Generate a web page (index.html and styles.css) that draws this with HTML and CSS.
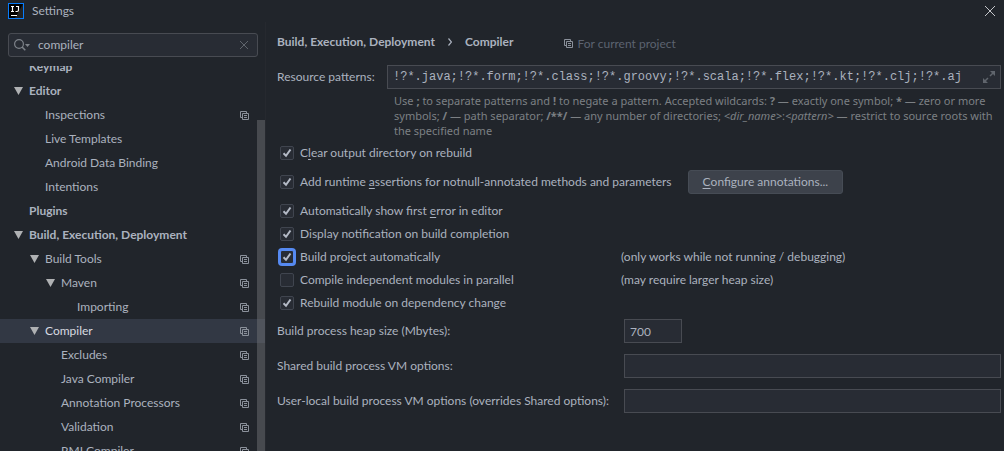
FILE: index.html
```html
<!DOCTYPE html>
<html lang="en">
<head>
<meta charset="utf-8">
<title>Settings</title>
<link rel="stylesheet" href="styles.css">
</head>
<body>
<svg class="defs" aria-hidden="true">
  <symbol id="copy" viewBox="0 0 9 9"><path d="M2 6.500H.5V.5h6V2M2.500 2.500h6v6h-6zM4 4.500h3M4 6.500h3" fill="none" stroke="currentColor"/></symbol>
  <symbol id="arrow" viewBox="0 0 9 8"><path d="M0 0h9L4.500 8z" fill="currentColor"/></symbol>
</svg>
<div class="window">
  <header class="titlebar">
    <svg class="logo" viewBox="0 0 16 16" aria-hidden="true"><rect width="16" height="16" fill="#087cfa"/><rect x="1" y="1" width="14" height="14" fill="#000"/><path d="M15 1v14H7z" fill="#222"/><path d="M3 3.500h3M4.500 3.500v5M3 8.500h3M8 3.500h2.500v3.500q0 1.500-1.500 1.500H7.500" fill="none" stroke="#fff" stroke-width="1.200"/><path d="M3 12h6v1H3z" fill="#fff"/></svg>
    <h1 class="title">Settings</h1>
    <button class="close" aria-label="Close"><svg width="10" height="10" viewBox="0 0 10 10"><path d="M0 0l10 10M10 0L0 10" stroke="currentColor" fill="none"/></svg></button>
  </header>
  <div class="body">
    <aside class="sidebar">
      <div class="search">
        <svg class="lens" viewBox="0 0 16 12" aria-hidden="true"><circle cx="5" cy="5" r="4.400" fill="none" stroke="currentColor" stroke-width="1.200"/><path d="M8 8l3.300 3.300" stroke="currentColor" stroke-width="1.500"/><path d="M11 5h5l-2.500 3z" fill="currentColor"/></svg>
        <input class="search-input" type="text" value="compiler" aria-label="Search settings">
        <button class="clear" aria-label="Clear search"><svg width="8" height="8" viewBox="0 0 8 8"><path d="M0 0l8 8M8 0L0 8" stroke="currentColor" fill="none"/></svg></button>
      </div>
      <nav class="tree" aria-label="Settings categories">
        <ul class="list">
          <li class="item top">Keymap</li>
          <li class="item top"><svg class="arrow"><use href="#arrow"/></svg>Editor</li>
          <li class="item l1">Inspections<svg class="copy"><use href="#copy"/></svg></li>
          <li class="item l1">Live Templates</li>
          <li class="item l1">Android Data Binding</li>
          <li class="item l1">Intentions</li>
          <li class="item top">Plugins</li>
          <li class="item top"><svg class="arrow"><use href="#arrow"/></svg>Build, Execution, Deployment</li>
          <li class="item l1"><svg class="arrow"><use href="#arrow"/></svg>Build Tools<svg class="copy"><use href="#copy"/></svg></li>
          <li class="item l2"><svg class="arrow"><use href="#arrow"/></svg>Maven<svg class="copy"><use href="#copy"/></svg></li>
          <li class="item l3">Importing<svg class="copy"><use href="#copy"/></svg></li>
          <li class="item l1 selected"><svg class="arrow"><use href="#arrow"/></svg>Compiler<svg class="copy"><use href="#copy"/></svg></li>
          <li class="item l2">Excludes<svg class="copy"><use href="#copy"/></svg></li>
          <li class="item l2">Java Compiler<svg class="copy"><use href="#copy"/></svg></li>
          <li class="item l2">Annotation Processors<svg class="copy"><use href="#copy"/></svg></li>
          <li class="item l2">Validation<svg class="copy"><use href="#copy"/></svg></li>
          <li class="item l2">RMI Compiler<svg class="copy"><use href="#copy"/></svg></li>
        </ul>
        <div class="thumb"></div>
      </nav>
    </aside>
    <main class="main">
      <div class="crumbs">
        <span>Build, Execution, Deployment</span>
        <svg class="chevron" viewBox="0 0 4 8" aria-hidden="true"><path d="M.5.5L3.500 4 .5 7.500" fill="none" stroke="currentColor" stroke-width="1.200"/></svg>
        <h2 class="page">Compiler</h2>
        <span class="scope"><svg class="copy"><use href="#copy"/></svg>For current project</span>
      </div>
      <div class="resource">
        <label for="patterns">Resource patterns:</label>
        <div class="field patterns">
          <input id="patterns" class="mono" type="text" value="!?*.java;!?*.form;!?*.class;!?*.groovy;!?*.scala;!?*.flex;!?*.kt;!?*.clj;!?*.aj">
          <button class="expand" aria-label="Expand"><svg width="12" height="12" viewBox="0 0 12 12"><path d="M7 0h5v5zM0 7v5h5z" fill="currentColor"/><path d="M7 5l3-3M5 7l-3 3" stroke="currentColor" stroke-width="1.500"/></svg></button>
        </div>
        <p class="hint">Use <b>;</b> to separate patterns and <b>!</b> to negate a pattern. Accepted wildcards: <b>?</b> — exactly one symbol; <b>*</b> — zero or more symbols; <b>/</b> — path separator; <b>/**/</b> — any number of directories; <i>&lt;dir_name&gt;</i>:<i>&lt;pattern&gt;</i> — restrict to source roots with the specified name</p>
      </div>
      <div class="checks">
        <div class="row"><label class="check"><input type="checkbox" checked><span>C<u>l</u>ear output directory on rebuild</span></label></div>
        <div class="row tall"><label class="check"><input type="checkbox" checked><span>Add runtime <u>a</u>ssertions for notnull-annotated methods and parameters</span></label><button class="button"><u>C</u>onfigure annotations...</button></div>
        <div class="row"><label class="check"><input type="checkbox" checked><span>Automatically show first <u>e</u>rror in editor</span></label></div>
        <div class="row"><label class="check"><input type="checkbox" checked><span>Display notification on build completion</span></label></div>
        <div class="row noted"><label class="check"><input class="focused" type="checkbox" checked><span>Build project automatically</span></label><span>(only works while not running / debugging)</span></div>
        <div class="row noted"><label class="check"><input type="checkbox"><span>Compile independent modules in parallel</span></label><span>(may require larger heap size)</span></div>
        <div class="row"><label class="check"><input type="checkbox" checked><span>Rebuild module on dependency change</span></label></div>
      </div>
      <div class="options">
        <label for="heap">Build process heap size (Mbytes):</label><input id="heap" class="field heap" type="text" value="700">
        <label for="shared">Shared build process VM options:</label><input id="shared" class="field" type="text">
        <label for="local">User-local build process VM options (overrides Shared options):</label><input id="local" class="field" type="text">
      </div>
    </main>
  </div>
</div>
</body>
</html>
```
FILE: styles.css
```css
* { box-sizing: border-box; }
body { margin: 0; background: #21252b; color: #abb2bf; font: 12px/16px Lato, "Open Sans", sans-serif; }
h1, h2, p, ul { margin: 0; padding: 0; font-size: 12px; }
input, button { font: inherit; color: inherit; margin: 0; padding: 0; border: 0; background: none; outline: 0; min-width: 0; }
button { display: flex; align-items: center; justify-content: center; }
svg { flex: none; }
.defs { display: none; }
.window { height: 100vh; display: flex; flex-direction: column; overflow: hidden; }
.titlebar { display: flex; align-items: center; gap: 8px; height: 22px; flex: none; padding: 0 9px 0 8px; }
.logo { width: 16px; height: 16px; }
.title { font-weight: 400; flex: 1; }
.close { color: #c4c6ca; }
.body { display: flex; flex: 1; min-height: 0; }
.sidebar { width: 266px; flex: none; display: flex; flex-direction: column; padding-top: 11px; border-right: 1px solid #26292f; }
.search { display: flex; align-items: center; gap: 8px; height: 24px; flex: none; margin: 0 7px 9px 8px; padding: 0 9px 0 5px; border: 1px solid #484b52; border-radius: 3px; background: #282c34; }
.lens { width: 16px; height: 12px; color: #7d8289; }
.search-input { flex: 1; }
.clear { color: #60656d; }
.tree { position: relative; flex: 1; min-height: 0; overflow: hidden; }
.list { list-style: none; margin-top: -11px; }
.item { display: flex; align-items: center; height: 24px; padding-left: 29px; padding-right: 16px; }
.top { font-weight: 700; }
.l1 { padding-left: 45px; }
.l2 { padding-left: 61px; }
.l3 { padding-left: 77px; }
.selected { background: #323844; color: #d7dae0; }
.arrow { width: 9px; height: 8px; margin-left: -15px; margin-right: 6px; color: #afb1b3; }
.copy { width: 9px; height: 9px; color: #8b919b; }
.item .copy { margin-left: auto; }
.thumb { position: absolute; right: 0; top: 54px; bottom: 0; width: 8px; background: rgba(110, 112, 115, .5); }
.main { flex: 1; min-width: 0; padding: 11px 3px 0 11px; }
.crumbs { display: flex; align-items: center; gap: 13px; height: 18px; font-weight: 700; }
.chevron { width: 4px; height: 8px; }
.scope { display: flex; align-items: center; gap: 4px; margin-left: 38px; padding-top: 3px; font-weight: 400; color: #5c6370; }
.resource { display: grid; grid-template-columns: 110px 1fr; align-items: center; padding-top: 14px; }
.field { height: 24px; min-width: 0; border: 1px solid #484b52; background: #282c34; padding: 0 5px; }
.patterns { display: flex; align-items: center; }
.mono { flex: 1; font-family: "Liberation Mono", monospace; }
.expand { color: #60656d; }
.hint { grid-column: 2; padding: 4px 0 0 7px; font: 11px/15px "Noto Sans", "Open Sans", sans-serif; color: #7c8084; }
.checks { padding-top: 3px; }
.row { display: flex; align-items: center; height: 23px; gap: 16px; }
.tall { height: 35px; }
.noted { display: grid; grid-template-columns: 344px 1fr; gap: 0; }
.check { display: flex; align-items: center; gap: 6px; padding-left: 3px; }
.check input { appearance: none; width: 14px; height: 14px; flex: none; border: 1px solid #40454f; border-radius: 2px; background: #282c34; }
.check input:checked { background: #282c34 url("data:image/svg+xml,%3Csvg xmlns='http://www.w3.org/2000/svg' viewBox='0 0 12 12'%3E%3Cpath d='M2.500 6.200l2.500 2.600L9.500 2.500' fill='none' stroke='%23b4bac6' stroke-width='2'/%3E%3C/svg%3E"); }
.check .focused { border-color: #568af2; box-shadow: 0 0 0 2px #568af2; }
u { text-underline-offset: 2px; }
.button { height: 24px; padding: 0 14px; border: 1px solid #464c55; border-radius: 3px; background: #3d424b; white-space: pre; }
.options { display: grid; grid-template-columns: 347px 1fr; row-gap: 11px; align-items: center; padding-top: 5px; white-space: nowrap; }
.heap { width: 58px; }
```
